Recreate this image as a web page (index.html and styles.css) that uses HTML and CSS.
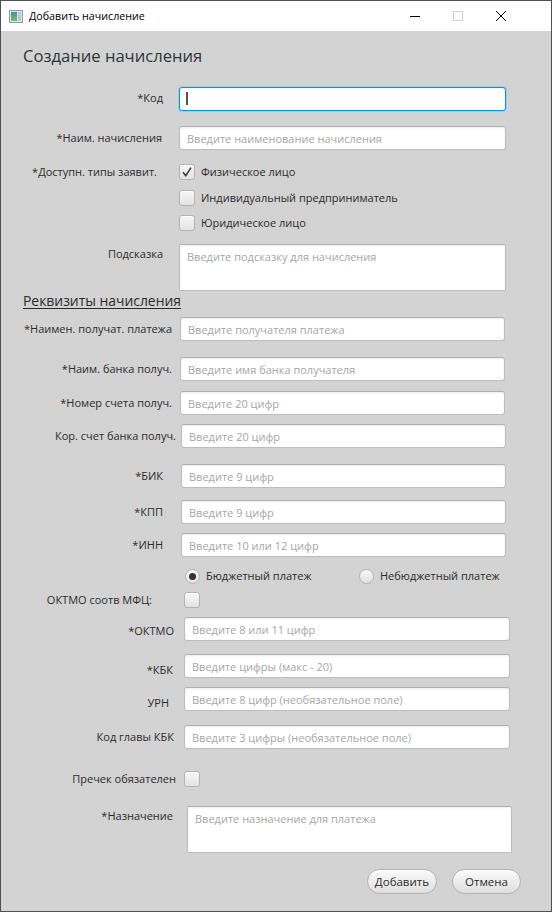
FILE: index.html
```html
<!DOCTYPE html>
<html lang="ru">
<head>
<meta charset="utf-8">
<title>Добавить начисление</title>
<link rel="stylesheet" href="styles.css">
</head>
<body>
<div class="window">
  <div class="titlebar">
    <svg class="app-icon" width="14" height="13" viewBox="0 0 14 13">
      <defs>
        <linearGradient id="ig" x1="0" y1="0" x2="0" y2="1">
          <stop offset="0" stop-color="#3f8f9c"/>
          <stop offset="1" stop-color="#7fbf6a"/>
        </linearGradient>
      </defs>
      <rect x="0.5" y="0.5" width="13" height="12" fill="#dfe7ec" stroke="#8f9ca6"/>
      <rect x="2" y="2" width="6" height="9" fill="url(#ig)"/>
      <rect x="9" y="2" width="3" height="9" fill="#b9c9d2"/>
    </svg>
    <span class="title">Добавить начисление</span>
    <div class="controls">
      <span class="ctl"><svg width="10" height="10" viewBox="0 0 10 10"><path d="M0 5.5H10" stroke="#000" stroke-width="1"/></svg></span>
      <span class="ctl"><svg width="10" height="10" viewBox="0 0 10 10"><rect x="0.5" y="0.5" width="9" height="9" fill="none" stroke="#cfcfcf"/></svg></span>
      <span class="ctl"><svg width="10" height="10" viewBox="0 0 10 10"><path d="M0 0L10 10M10 0L0 10" stroke="#000" stroke-width="1"/></svg></span>
    </div>
  </div>

  <div class="content">
    <h1 class="page-title">Создание начисления</h1>

    <div class="row sec-a mt17">
      <label class="lbl pr16">*Код</label>
      <div class="field focused"><input class="input" type="text"><span class="caret"></span></div>
    </div>
    <div class="row sec-a mt16">
      <label class="lbl pr17">*Наим. начисления</label>
      <input class="input" type="text" placeholder="Введите наименование начисления">
    </div>
    <div class="row sec-a check-row mt14">
      <label class="lbl pr22">*Доступн. типы заявит.</label>
      <div class="check"><span class="cb checked"><svg width="14" height="14" viewBox="0 0 14 14"><path d="M3 7.2L5.8 10.6L11 2.6" fill="none" stroke="#3a3a3a" stroke-width="1.6"/></svg></span><span class="check-text">Физическое лицо</span></div>
    </div>
    <div class="row sec-a check-row mt10">
      <span class="lbl"></span>
      <div class="check"><span class="cb"></span><span class="check-text">Индивидуальный предприниматель</span></div>
    </div>
    <div class="row sec-a check-row mt9">
      <span class="lbl"></span>
      <div class="check"><span class="cb"></span><span class="check-text">Юридическое лицо</span></div>
    </div>
    <div class="row sec-a area-row mt13">
      <label class="lbl pr16">Подсказка</label>
      <textarea class="area" placeholder="Введите подсказку для начисления"></textarea>
    </div>

    <h2 class="section-title">Реквизиты начисления</h2>

    <div class="row sec-b mt6">
      <label class="lbl pr8">*Наимен. получат. платежа</label>
      <input class="input" type="text" placeholder="Введите получателя платежа">
    </div>
    <div class="row sec-b mt16">
      <label class="lbl pr8">*Наим. банка получ.</label>
      <input class="input" type="text" placeholder="Введите имя банка получателя">
    </div>
    <div class="row sec-b mt10">
      <label class="lbl pr8">*Номер счета получ.</label>
      <input class="input" type="text" placeholder="Введите 20 цифр">
    </div>
    <div class="row sec-b2 mt9">
      <label class="lbl pr5">Кор. счет банка получ.</label>
      <input class="input" type="text" placeholder="Введите 20 цифр">
    </div>
    <div class="row sec-b2 mt16">
      <label class="lbl pr18">*БИК</label>
      <input class="input" type="text" placeholder="Введите 9 цифр">
    </div>
    <div class="row sec-b2 mt12">
      <label class="lbl pr18">*КПП</label>
      <input class="input" type="text" placeholder="Введите 9 цифр">
    </div>
    <div class="row sec-b2 mt9">
      <label class="lbl pr18">*ИНН</label>
      <input class="input" type="text" placeholder="Введите 10 или 12 цифр">
    </div>

    <div class="row sec-r mt11">
      <span class="lbl"></span>
      <div class="radios">
        <span class="radio-item"><span class="rb selected"></span><span class="check-text">Бюджетный платеж</span></span>
        <span class="radio-item"><span class="rb"></span><span class="check-text">Небюджетный платеж</span></span>
      </div>
    </div>
    <div class="row sec-c check-row mt9">
      <label class="lbl pr32">ОКТМО соотв МФЦ:</label>
      <div class="check"><span class="cb"></span></div>
    </div>
    <div class="row sec-c mt9">
      <label class="lbl pr10 low2">*ОКТМО</label>
      <input class="input" type="text" placeholder="Введите 8 или 11 цифр">
    </div>
    <div class="row sec-c mt13">
      <label class="lbl pr11 low4">*КБК</label>
      <input class="input" type="text" placeholder="Введите цифры (макс - 20)">
    </div>
    <div class="row sec-c mt9">
      <label class="lbl pr15 low4">УРН</label>
      <input class="input" type="text" placeholder="Введите 8 цифр (необязательное поле)">
    </div>
    <div class="row sec-c mt14">
      <label class="lbl pr10">Код главы КБК</label>
      <input class="input" type="text" placeholder="Введите 3 цифры (необязательное поле)">
    </div>
    <div class="row sec-c check-row mt22">
      <label class="lbl pr8">Пречек обязателен</label>
      <div class="check"><span class="cb"></span></div>
    </div>
    <div class="row sec-d area-row mt19">
      <label class="lbl pr14">*Назначение</label>
      <textarea class="area" placeholder="Введите назначение для платежа"></textarea>
    </div>

    <div class="buttons">
      <button class="btn" type="button">Добавить</button>
      <button class="btn" type="button">Отмена</button>
    </div>
  </div>
</div>
</body>
</html>
```

FILE: styles.css
```css
* { box-sizing: border-box; }
html, body { margin: 0; padding: 0; }
body {
  width: 552px;
  height: 912px;
  overflow: hidden;
  font-family: "Open Sans", "Noto Sans", sans-serif;
  color: #2b2b2b;
}

.window {
  width: 552px;
  height: 912px;
  border: 1px solid #505050;
  background: #d3d3d3;
  display: flex;
  flex-direction: column;
}

/* title bar */
.titlebar {
  flex: none;
  height: 30px;
  background: #fff;
  display: flex;
  align-items: center;
}
.app-icon { margin-left: 8px; flex: none; }
.title {
  margin-left: 6px;
  font-size: 10.7px;
  color: #000;
}
.controls {
  margin-left: auto;
  margin-right: 29px;
  display: flex;
}
.ctl {
  width: 43px;
  height: 30px;
  display: flex;
  align-items: center;
  justify-content: center;
}

/* content */
.content {
  flex: 1;
  display: flex;
  flex-direction: column;
}
.page-title {
  margin: 12px 0 0 22px;
  font-size: 16.6px;
  line-height: 26px;
  font-weight: 400;
  color: #2f3438;
}
.section-title {
  margin: 0 0 0 22px;
  font-size: 13.9px;
  line-height: 20px;
  font-weight: 400;
  color: #2b2b2b;
  text-decoration: underline;
  text-underline-offset: 2px;
  text-decoration-thickness: 1px;
  align-self: flex-start;
}

.row {
  display: grid;
  grid-template-columns: var(--col) 1fr;
  margin-right: var(--mr);
  align-items: center;
  height: 24px;
}
.sec-a { --col: 178px; --mr: 45px; }
.sec-b { --col: 179px; --mr: 46px; }
.sec-b2 { --col: 180px; --mr: 45px; }
.sec-r { --col: 183px; --mr: 40px; }
.sec-c { --col: 183px; --mr: 41px; }
.sec-d { --col: 186px; --mr: 39px; }

.check-row { height: 16px; }
.sec-r { height: 15px; }
.area-row { height: 47px; align-items: start; }
.area-row .lbl { padding-top: 2px; }

.lbl {
  font-size: 11px;
  line-height: 16px;
  text-align: right;
  white-space: nowrap;
  color: #2b2b2b;
}
.low2 { padding-top: 3px; }
.low4 { padding-top: 7px; }

.pr5 { padding-right: 5px; }
.pr8 { padding-right: 8px; }
.pr10 { padding-right: 10px; }
.pr11 { padding-right: 11px; }
.pr14 { padding-right: 14px; }
.pr15 { padding-right: 15px; }
.pr16 { padding-right: 16px; }
.pr17 { padding-right: 17px; }
.pr18 { padding-right: 18px; }
.pr22 { padding-right: 22px; }
.pr32 { padding-right: 32px; }

.mt6 { margin-top: 6px; }
.mt9 { margin-top: 9px; }
.mt10 { margin-top: 10px; }
.mt11 { margin-top: 11px; }
.mt12 { margin-top: 12px; }
.mt13 { margin-top: 13px; }
.mt14 { margin-top: 14px; }
.mt16 { margin-top: 16px; }
.mt17 { margin-top: 17px; }
.mt19 { margin-top: 19px; }
.mt22 { margin-top: 22px; }

.input, .area {
  width: 100%;
  margin: 0;
  font-family: inherit;
  font-size: 11px;
  color: #333;
  background: #fff;
  border: 1px solid #bdbdbd;
  border-top-color: #b0b0b0;
  border-radius: 3px;
  box-shadow: inset 0 1px 2px rgba(0, 0, 0, 0.08);
  outline: none;
}
.input {
  height: 24px;
  padding: 0 7px;
}
.area {
  height: 47px;
  padding: 4px 7px;
  resize: none;
  line-height: 16px;
  border-radius: 2px;
}
.input::placeholder, .area::placeholder { color: #a6a6a6; opacity: 1; }

.field { position: relative; height: 24px; }
.field.focused .input {
  border: 1px solid #0a96d2;
  box-shadow: 0 0 0 1px #8fd3ef, inset 0 1px 2px rgba(0, 0, 0, 0.06);
}
.caret {
  position: absolute;
  left: 7px;
  top: 6px;
  width: 2px;
  height: 13px;
  background: #555;
}

/* checkbox */
.check {
  display: flex;
  align-items: center;
  height: 16px;
}
.cb {
  flex: none;
  width: 16px;
  height: 16px;
  border: 1px solid #b3b3b3;
  border-radius: 3px;
  background: linear-gradient(#f7f7f7, #e3e3e3);
  box-shadow: inset 0 1px 0 #fff;
  display: flex;
  align-items: center;
  justify-content: center;
}
.check-text {
  margin-left: 6px;
  font-size: 11px;
  line-height: 16px;
  color: #2b2b2b;
  white-space: nowrap;
}

/* radios */
.radios {
  display: grid;
  grid-template-columns: 174px auto;
  align-items: center;
  padding-left: 1px;
}
.radio-item { display: flex; align-items: center; }
.rb {
  flex: none;
  width: 15px;
  height: 15px;
  border-radius: 50%;
  border: 1px solid #b3b3b3;
  background: linear-gradient(#f7f7f7, #e1e1e1);
  display: flex;
  align-items: center;
  justify-content: center;
}
.rb.selected::after {
  content: "";
  width: 7px;
  height: 7px;
  border-radius: 50%;
  background: #333;
}
.radio-item .check-text { margin-left: 6px; }

/* buttons */
.buttons {
  display: flex;
  justify-content: flex-end;
  gap: 15px;
  margin: 16px 30px 0 0;
}
.btn {
  height: 25px;
  min-width: 69px;
  padding: 0 7px;
  font-family: inherit;
  font-size: 11.5px;
  color: #2b2b2b;
  border: 1px solid #b2b2b2;
  border-radius: 13px;
  background: linear-gradient(#fbfbfb, #dedede);
  box-shadow: inset 0 1px 0 #fff;
}
```
